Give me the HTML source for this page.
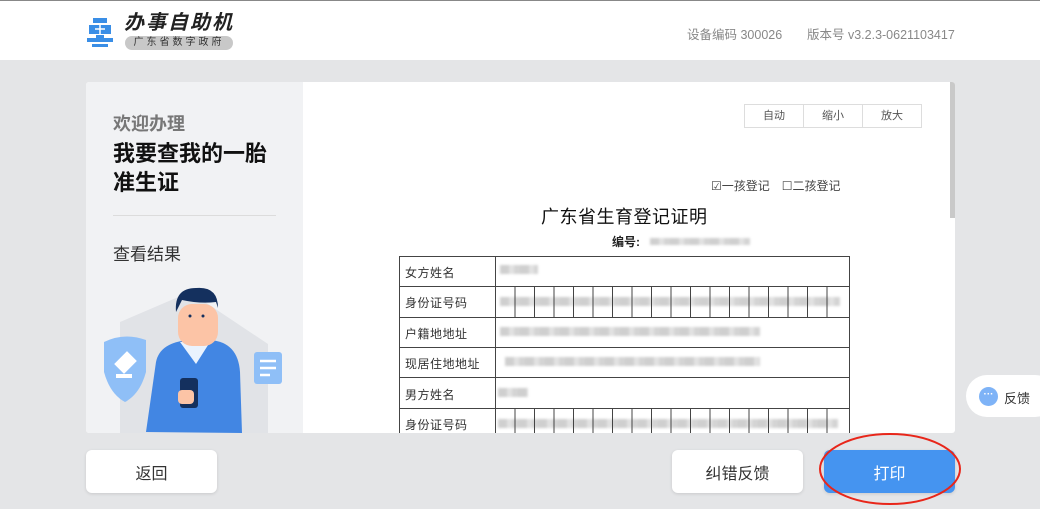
<!DOCTYPE html>
<html><head><meta charset="utf-8"><style>
*{margin:0;padding:0;box-sizing:border-box}
body{width:1040px;height:509px;overflow:hidden;background:#e4e5e7;font-family:"Liberation Sans","Noto Sans CJK SC",sans-serif;position:relative}
.abs{position:absolute}
.hdr{left:0;top:0;width:1040px;height:60px;background:#fff;border-top:1px solid #888}
.card{left:86px;top:82px;width:869px;height:351px;background:#fff;border-radius:3px;overflow:hidden}
.lp{left:0;top:0;width:217px;height:351px;background:#f1f2f4}
.btn{background:#fff;border-radius:6px;box-shadow:0 1px 3px rgba(0,0,0,.12);font-size:16px;color:#333;display:flex;align-items:center;justify-content:center}
.lbl{font-size:12px;color:#333;letter-spacing:0.5px}
.blur{background:repeating-linear-gradient(90deg,#cfcfcf 0 9px,#e2e2e2 9px 14px,#d4d4d4 14px 20px);filter:blur(1.2px);height:9px}
.hl{left:399px;width:451px;height:1px;background:#444}
</style></head><body>
<div class="abs hdr">
 <svg class="abs" style="left:86px;top:15px" width="28" height="32" viewBox="0 0 28 32">
  <rect x="7" y="2" width="14" height="5" fill="#3a8ee6"/>
  <rect x="3" y="9" width="22" height="9" fill="#3a8ee6"/>
  <rect x="10" y="19" width="8" height="6" fill="#3a8ee6"/>
  <rect x="1" y="22" width="26" height="4" fill="#3a8ee6"/>
  <rect x="6" y="28" width="16" height="3" fill="#3a8ee6"/>
  <path d="M14 9 L14 18 M9 13 L19 13" stroke="#fff" stroke-width="1.5"/>
 </svg>
 <div class="abs" style="left:124px;top:10px;font-size:20px;font-weight:bold;font-style:italic;color:#222;letter-spacing:2px;line-height:24px">办事自助机</div>
 <div class="abs" style="left:125px;top:35px;width:108px;height:14px;border-radius:7px;background:#c8c8c8;font-size:10px;color:#333;text-align:center;line-height:14px;letter-spacing:3px">广东省数字政府</div>
 <div class="abs" style="left:687px;top:23px;font-size:12.5px;color:#888">设备编码 300026</div>
 <div class="abs" style="left:807px;top:23px;font-size:12.5px;color:#888">版本号 v3.2.3-0621103417</div>
</div>
<div class="abs card">
 <div class="abs lp">
  <div class="abs" style="left:27px;top:28px;font-size:18px;color:#777;font-weight:bold">欢迎办理</div>
  <div class="abs" style="left:27px;top:57px;font-size:22px;color:#111;font-weight:bold;line-height:29px">我要查我的一胎<br>准生证</div>
  <div class="abs" style="left:27px;top:133px;width:163px;height:1px;background:#dcdcdc"></div>
  <div class="abs" style="left:27px;top:158px;font-size:17px;color:#333">查看结果</div>
  <svg class="abs" style="left:4px;top:200px" width="210" height="151" viewBox="0 0 210 151">
   <path d="M30 40 L100 10 L178 62 L178 151 L30 151Z" fill="#e1e3e7"/>
   <path d="M14 60 Q34 50 56 58 L56 90 Q50 112 35 120 Q20 112 14 90Z" fill="#8fbff7"/>
   <path d="M27 82 L37 72 L44 79 L34 89Z M26 94 L42 94" stroke="#fff" stroke-width="4" fill="#fff"/>
   <rect x="164" y="70" width="28" height="32" rx="3" fill="#8fbff7"/>
   <path d="M170 79h16M170 86h16M170 93h10" stroke="#fff" stroke-width="2.5"/>
   <path d="M56 150 L66 80 Q70 60 100 58 L120 58 Q148 60 150 90 L152 151Z" fill="#4286e3"/>
   <path d="M90 60 L106 82 L120 60Z" fill="#eaf3fe"/>
   <rect x="88" y="22" width="40" height="42" rx="14" fill="#fcc4a6"/>
   <path d="M86 30 Q84 6 106 6 Q128 4 128 26 L126 20 Q110 22 92 18 Z" fill="#14305e"/>
   <circle cx="100" cy="34" r="1.5" fill="#14305e"/><circle cx="113" cy="34" r="1.5" fill="#14305e"/>
   <rect x="90" y="96" width="18" height="30" rx="3" fill="#14305e"/>
   <rect x="88" y="108" width="16" height="14" rx="4" fill="#fcc4a6"/>
  </svg>
 </div>
 <div class="abs" style="left:864px;top:0;width:5px;height:136px;background:#c9c9c9"></div>
</div>
<div class="abs" style="left:744px;top:104px;width:178px;height:24px;border:1px solid #ddd;display:flex;font-size:11px;color:#555">
 <div style="flex:1;text-align:center;line-height:22px;border-right:1px solid #ddd">自动</div>
 <div style="flex:1;text-align:center;line-height:22px;border-right:1px solid #ddd">缩小</div>
 <div style="flex:1;text-align:center;line-height:22px">放大</div>
</div>
<div class="abs" style="left:711px;top:177px;font-size:12px;color:#444">☑一孩登记　☐二孩登记</div>
<div class="abs" style="left:541px;top:203px;font-size:18px;color:#111;letter-spacing:0.5px">广东省生育登记证明</div>
<div class="abs" style="left:612px;top:233px;font-size:12px;color:#222;font-weight:bold">编号:</div>
<div class="abs blur" style="left:650px;top:238px;width:100px;height:7px"></div>
<div class="abs" style="left:399px;top:256px;width:451px;height:177px;border-left:1px solid #444;border-right:1px solid #444"></div>
<div class="abs hl" style="top:256px"></div><div class="abs hl" style="top:286px"></div><div class="abs hl" style="top:317px"></div><div class="abs hl" style="top:347px"></div><div class="abs hl" style="top:377px"></div><div class="abs hl" style="top:408px"></div>
<div class="abs" style="left:495px;top:256px;width:1px;height:177px;background:#444"></div>
<div class="abs lbl" style="left:405px;top:264px">女方姓名</div>
<div class="abs lbl" style="left:405px;top:294px">身份证号码</div>
<div class="abs lbl" style="left:405px;top:325px">户籍地地址</div>
<div class="abs lbl" style="left:405px;top:355px">现居住地地址</div>
<div class="abs lbl" style="left:405px;top:386px">男方姓名</div>
<div class="abs lbl" style="left:405px;top:416px">身份证号码</div>
<div class="abs blur" style="left:500px;top:265px;width:38px"></div>
<div class="abs blur" style="left:500px;top:297px;width:340px"></div>
<div class="abs blur" style="left:500px;top:327px;width:260px"></div>
<div class="abs blur" style="left:505px;top:357px;width:255px"></div>
<div class="abs blur" style="left:498px;top:388px;width:30px"></div>
<div class="abs blur" style="left:498px;top:419px;width:340px"></div>
<svg class="abs" style="left:0;top:0" width="1040" height="509">
 <g stroke="#444" stroke-width="1">
  <path d="M515 287v30M534.5 287v30M554 287v30M573.5 287v30M593 287v30M612.5 287v30M632 287v30M651.5 287v30M671 287v30M690.5 287v30M710 287v30M729.5 287v30M749 287v30M768.5 287v30M788 287v30M807.5 287v30M827 287v30"/>
  <path d="M515 409v24M534.5 409v24M554 409v24M573.5 409v24M593 409v24M612.5 409v24M632 409v24M651.5 409v24M671 409v24M690.5 409v24M710 409v24M729.5 409v24M749 409v24M768.5 409v24M788 409v24M807.5 409v24M827 409v24"/>
 </g>
</svg>
<div class="abs" style="left:966px;top:375px;width:90px;height:42px;border-radius:21px;background:#fff"></div>
<div class="abs" style="left:979px;top:387px;width:19px;height:19px;border-radius:50%;background:#7eb3f7;color:#fff;font-size:10px;text-align:center;line-height:15px;font-weight:bold">···</div>
<div class="abs" style="left:1004px;top:388px;font-size:13px;color:#333">反馈</div>
<div class="abs btn" style="left:86px;top:450px;width:131px;height:43px">返回</div>
<div class="abs btn" style="left:672px;top:450px;width:131px;height:43px">纠错反馈</div>
<div class="abs btn" style="left:824px;top:450px;width:131px;height:43px;background:#4594f0;color:#fff">打印</div>
<svg class="abs" style="left:0;top:0" width="1040" height="509"><ellipse cx="890" cy="469" rx="70" ry="35" fill="none" stroke="#e8261a" stroke-width="2"/></svg>
</body></html>
